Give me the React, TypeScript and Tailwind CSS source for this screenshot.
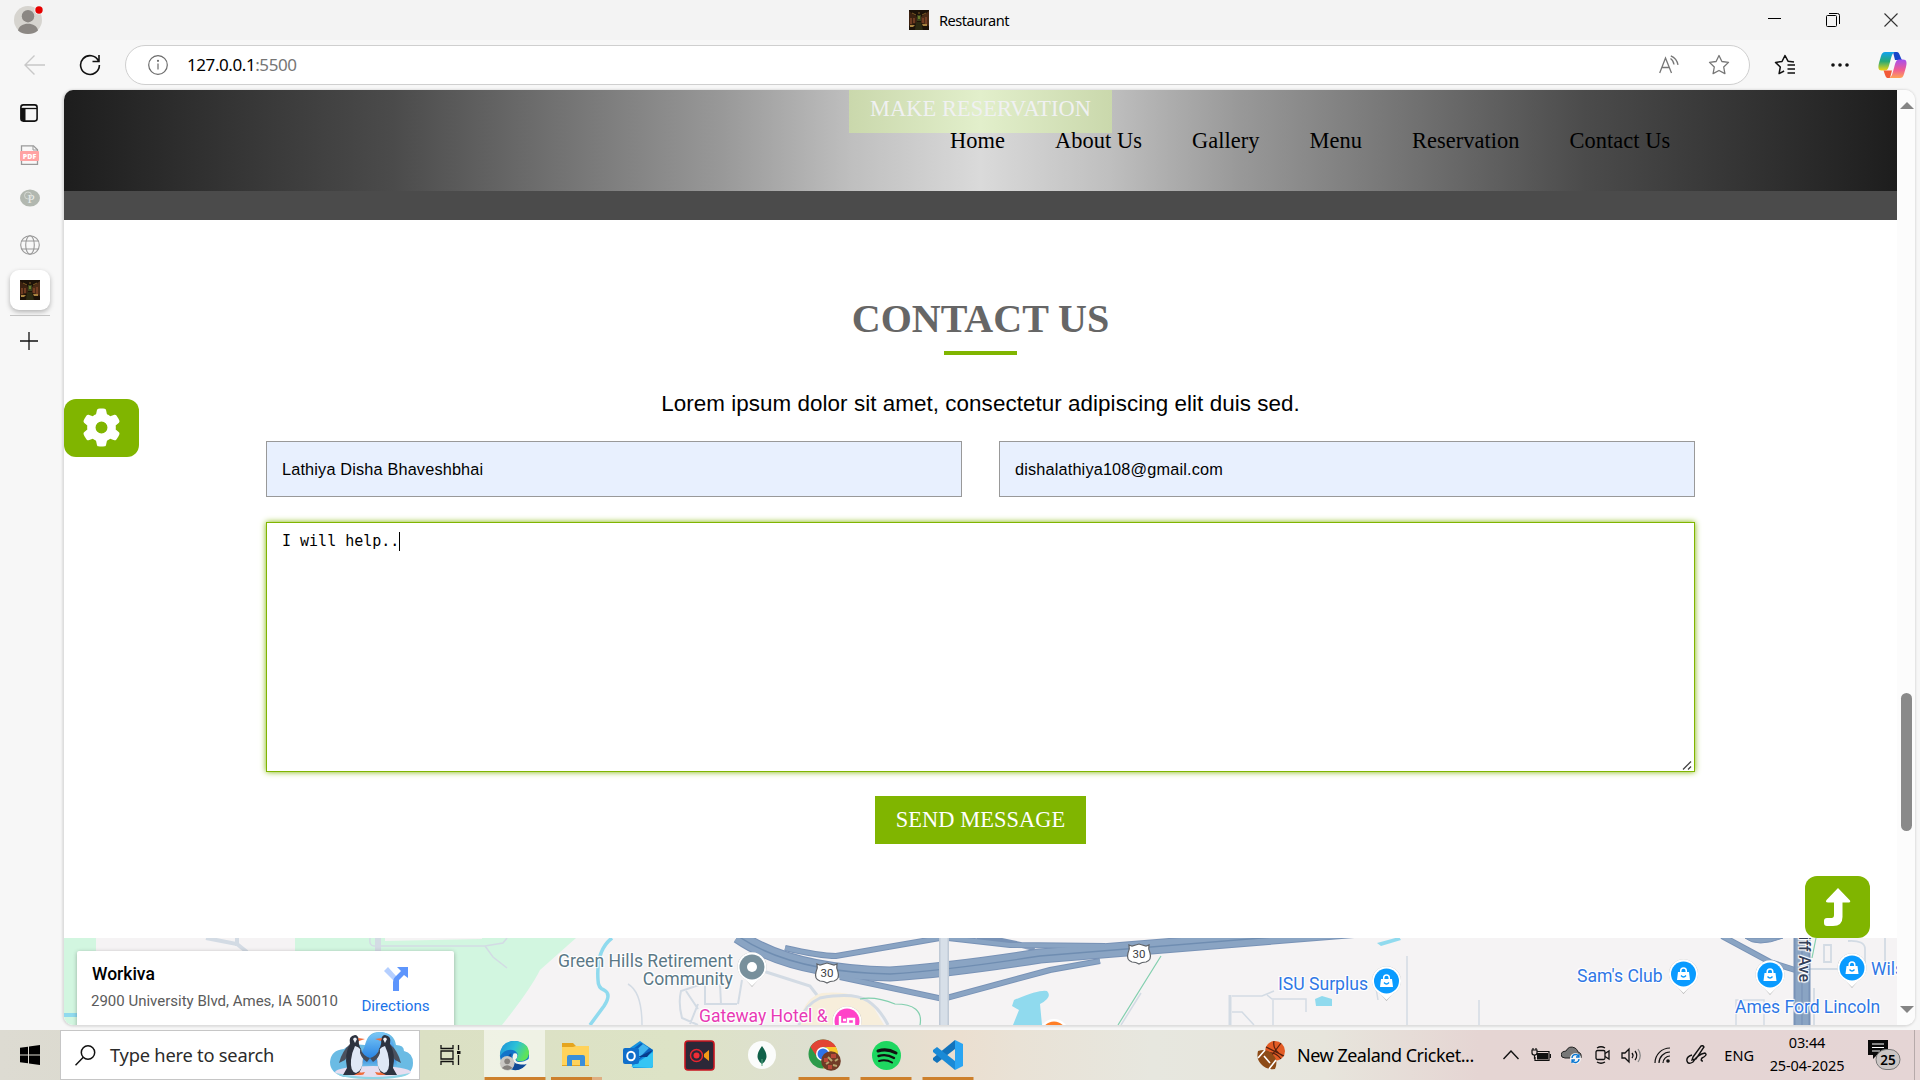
import React from "react";

type IconProps = { className?: string };

const Favicon = ({ className = "" }: IconProps) => (
  <svg className={className} width="20" height="20" viewBox="0 0 20 20">
    <rect width="20" height="20" fill="#1c1208" />
    <path d="M0 1L8 7V13L0 16Z" fill="#3b2110" />
    <path d="M20 1L12 7V13L20 16Z" fill="#4a2b16" />
    <path d="M2 8v6M5 8v5M14 8v5M17 7v7" stroke="#8a4a2c" strokeWidth="1.3" />
    <path d="M8 5h4v6H8z" fill="#38401c" />
    <path d="M9 6h2v3H9z" fill="#6b7a2c" />
    <path d="M1 15h5l-2 2H1zM13 14h5v2h-4z" fill="#a9843f" />
    <path d="M7 12h5l2 8H6z" fill="#2c2a12" />
    <path d="M3 3l4 2M17 3l-4 2M9 3h2" stroke="#7c5a24" />
  </svg>
);

const TitleBar = () => (
  <header className="flex h-10 shrink-0 items-center bg-[#f3f3f3]">
    <svg className="ml-3 shrink-0" width="34" height="40" viewBox="0 0 34 40">
      <circle cx="16" cy="20" r="14" fill="#d6d4cf" />
      <circle cx="16" cy="16.2" r="6.2" fill="#8b8783" />
      <path d="M6 30.5C7 26 11 23.8 16 23.8S25 26 26 30.5C23 33.200 19.500 34 16 34S9 33.200 6 30.500Z" fill="#8b8783" />
      <circle cx="27" cy="10" r="4.600" fill="#f3f3f3" />
      <circle cx="27" cy="10" r="3.700" fill="#e60000" />
    </svg>
    <div className="ml-[863px] flex items-center gap-[10px]">
      <Favicon />
      <span className="text-[14.6px] leading-5 tracking-[-0.5px] text-black">Restaurant</span>
    </div>
    <div className="ml-auto flex items-center gap-11 pr-[22px] text-black">
      <svg width="14" height="14" viewBox="0 0 14 14"><path d="M0 5.500h13" stroke="currentColor" /></svg>
      <svg width="14" height="14" viewBox="0 0 14 14" fill="none" stroke="currentColor"><rect x=".5" y="2.500" width="10" height="11" rx="1" /><path d="M3 .5h8.500q2 0 2 2V11" /></svg>
      <svg width="14" height="14" viewBox="0 0 14 14" stroke="#333" strokeWidth="1.1"><path d="M.5 .5l13 13M13.500 .5l-13 13" /></svg>
    </div>
  </header>
);

const Toolbar = () => (
  <div className="flex h-[50px] shrink-0 items-start bg-[#f7f7f7] pt-[5px]">
    <svg className="mt-[9px] ml-6 shrink-0" width="22" height="22" viewBox="0 0 22 22" fill="none" stroke="#c8c8c8" strokeWidth="1.4"><path d="M21 11H1M10.500 1.500L1 11l9.500 9.500" /></svg>
    <svg className="mt-[9px] ml-[33px] shrink-0" width="22" height="22" viewBox="0 0 22 22" fill="none" stroke="#111" strokeWidth="1.600"><path d="M19.500 7A9.400 9.400 0 1 0 20.400 11M20 1v6.500h-6.500" /></svg>
    <div className="ml-6 flex h-10 w-[1625px] shrink-0 items-center rounded-full border border-[#cfcfcf] bg-white pl-[22px]">
      <svg width="20" height="20" viewBox="0 0 20 20" fill="none" stroke="#6b6b6b" strokeWidth="1.2"><circle cx="10" cy="10" r="9.300" /><path d="M10 8.500v6" /><circle cx="10" cy="5.800" r=".5" fill="#6b6b6b" /></svg>
      <span className="ml-[19px] text-[17px] leading-6 tracking-[-0.42px] text-black">127.0.0.1<span className="text-[#767676]">:5500</span></span>
      <svg className="mr-[29px] ml-auto" width="20" height="20" viewBox="0 0 20 20" fill="none" stroke="#767676" strokeWidth="1.3"><path d="M.7 18L6.500 3L12.500 18M2.800 12.500h7.600M11.500 3.500q3 2 3.500 6M11.800 .8q6 2.500 7.200 9" /></svg>
      <svg className="mr-[19px]" width="22" height="22" viewBox="0 0 22 22" fill="none" stroke="#767676" strokeWidth="1.3" strokeLinejoin="round"><path d="M11 1.500l2.900 6 6.600.9-4.800 4.600 1.200 6.600L11 16.500l-5.900 3.100 1.200-6.600L1.500 8.400l6.600-.9z" /></svg>
    </div>
    <svg className="mt-[9px] ml-6 shrink-0" width="22" height="22" viewBox="0 0 22 22" fill="none" stroke="#111" strokeWidth="1.500" strokeLinejoin="round"><path d="M20 8l-6-.8L11 1.500l-3 6-6.500.9 4.800 4.600-1.200 6.600 5-2.600M13.500 11H21M13.500 15H21M13.500 19H21" /></svg>
    <svg className="mt-[17px] ml-[35px] shrink-0" width="18" height="6" viewBox="0 0 18 6" fill="#111"><circle cx="2" cy="3" r="1.800" /><circle cx="9" cy="3" r="1.800" /><circle cx="16" cy="3" r="1.800" /></svg>
    <svg className="mt-[6px] ml-[29px] shrink-0" width="29" height="28" viewBox="0 0 29 28">
      <defs>
        <linearGradient id="cpA" x1="0" y1="0" x2="0" y2="1"><stop stopColor="#10a2f0" /><stop offset=".5" stopColor="#25a978" /><stop offset="1" stopColor="#f1d411" /></linearGradient>
        <linearGradient id="cpB" x1="0" y1="0" x2="0" y2="1"><stop stopColor="#a44ff0" /><stop offset=".55" stopColor="#ef5a95" /><stop offset="1" stopColor="#ffa453" /></linearGradient>
      </defs>
      <path d="M15 1h4c2.500 0 3.200 5 5 8H17z" fill="#1746c9" />
      <path d="M7 1h10c-3 1-3.600 5-5 10s-2 8.500-5 8.500H3.500C0 19.500 0 16 1 12l2-7C4 2 5 1 7 1z" fill="url(#cpA)" />
      <path d="M12 27h-2.500c-2 0-2.500-4-4-7.500H14z" fill="#f25a37" />
      <path d="M22 27H11c3-1 3.600-5 5-10s2-8.500 5-8.500h4c4 0 4 3.500 3 7.500l-2 7c-1 3-2 4-4 4z" fill="url(#cpB)" />
    </svg>
  </div>
);

const SideTabs = () => (
  <aside className="flex w-[63px] shrink-0 flex-col bg-[#f7f7f7]">
    <svg className="mt-[14px] ml-5" width="18" height="18" viewBox="0 0 18 18"><rect x=".9" y=".9" width="16.200" height="16.200" rx="2.500" fill="none" stroke="#111" strokeWidth="1.600" /><path d="M1 4.500h16" stroke="#111" strokeWidth="1.300" /><path d="M1 4h4.500v13H3q-2 0-2-2z" fill="#111" /></svg>
    <svg className="mt-[23px] ml-5" width="20" height="20" viewBox="0 0 20 20"><path d="M1.500 19.300V.8h12l4 4v14.500z" fill="#f8f8f8" stroke="#9a9a9a" strokeWidth="1.300" /><path d="M13 1v4h4.500" fill="none" stroke="#9a9a9a" /><rect y="6" width="19" height="10" rx="1" fill="#ffa3a3" /><text x="9.500" y="13.600" textAnchor="middle" fontSize="7" fontWeight="900" fill="white">PDF</text></svg>
    <svg className="mt-6 ml-5" width="20" height="18" viewBox="0 0 20 18"><ellipse cx="10" cy="9" rx="10" ry="8.600" fill="#b2b8b0" /><text x="11" y="14" textAnchor="middle" fontSize="13" fill="#e9ebe7" fontFamily="Liberation Serif">P</text><circle cx="8" cy="6.500" r="3.500" fill="none" stroke="#dcdfda" strokeWidth=".8" /></svg>
    <svg className="mt-7 ml-5" width="20" height="20" viewBox="0 0 20 20" fill="none" stroke="#999" strokeWidth="1.100"><circle cx="10" cy="10" r="9.300" /><ellipse cx="10" cy="10" rx="4.300" ry="9.300" /><path d="M1.600 6h16.800M1.600 14h16.800" /></svg>
    <div className="mt-[15px] ml-[10px] flex size-10 items-center justify-center rounded-[9px] bg-white shadow-[0_2px_5px_rgba(0,0,0,0.28)]"><Favicon /></div>
    <div className="mt-[5px] ml-[10px] h-px w-10 bg-[#c4c4c4]" />
    <svg className="mt-4 ml-5" width="18" height="18" viewBox="0 0 18 18" stroke="#111" strokeWidth="1.300"><path d="M0 9h18M9 0v18" /></svg>
  </aside>
);

const NAV = ["Home", "About Us", "Gallery", "Menu", "Reservation", "Contact Us"];

const SiteHeader = () => (
  <div className="relative h-[101px] shrink-0 bg-[linear-gradient(90deg,#1d1d1d_0%,#4b4b4b_18%,#999_36%,#bfbfbf_43%,#dadada_50%,#bfbfbf_57%,#999_64%,#4b4b4b_83%,#1d1d1d_100%)] font-[Liberation_Serif,serif] text-black">
    <div className="absolute top-0 left-[785px] h-[43px] w-[263px] bg-[linear-gradient(90deg,#cad8ac,#e2efcb_50%,#cad8ac)] pt-[4px] text-center text-[22.4px] leading-[30px] tracking-[0.06px] text-[#f0f1f2]">MAKE RESERVATION</div>
    <nav className="relative flex gap-[50px] pt-[36px] pl-[886px] text-[22.4px] leading-[30px] tracking-[0.06px] whitespace-nowrap">
      {NAV.map((n) => <a key={n}>{n}</a>)}
    </nav>
  </div>
);

const Contact = () => (
  <section className="relative flex h-[718px] shrink-0 flex-col items-center">
    <h2 className="mt-[75px] font-[Liberation_Serif,serif] text-[40px] leading-[48px] font-bold text-[#666]">CONTACT US</h2>
    <div className="mt-2 h-1 w-[73px] bg-[#80b500]" />
    <p className="mt-[34px] font-[Liberation_Sans,sans-serif] text-[22.4px] leading-[30px] tracking-[0.06px] text-black">Lorem ipsum dolor sit amet, consectetur adipiscing elit duis sed.</p>
    <div className="mt-[22px] flex gap-[37px] font-[Liberation_Sans,sans-serif] text-[16.300px] tracking-[0.16px] text-black">
      <div className="flex h-14 w-[696px] items-center border border-[#999] bg-[#e8f0fe] px-[15px]">Lathiya Disha Bhaveshbhai</div>
      <div className="flex h-14 w-[696px] items-center border border-[#999] bg-[#e8f0fe] px-[15px]">dishalathiya108@gmail.com</div>
    </div>
    <div className="mt-[25px] flex h-[250px] w-[1429px] justify-between border border-[#80b500] shadow-[0_0_6px_#80b500]">
      <div className="flex h-9 items-center pl-[15px] font-[DejaVu_Sans_Mono,monospace] text-[15px] text-black">I will help..<span className="h-[19px] w-px bg-black" /></div>
      <svg className="mr-[2px] mb-[1px] self-end" width="10" height="9" viewBox="0 0 10 9" stroke="#444" strokeWidth="1.300"><path d="M1 8.500L9 .5M6 8.500L9 5.500" /></svg>
    </div>
    <button className="mt-6 h-12 w-[211px] bg-[#80b500] font-[Liberation_Serif,serif] text-[22.4px] tracking-[0.06px] text-white">SEND MESSAGE</button>
    <div className="absolute top-[179px] left-0 flex h-[58px] w-[75px] items-center justify-center rounded-xl bg-[#80b500]">
      <svg className="mb-px" width="37" height="39" viewBox="8 0 496 512" fill="white"><path d="M495.900 166.600c3.200 8.700.5 18.400-6.400 24.600l-43.300 39.400c1.100 8.300 1.700 16.800 1.700 25.400s-.6 17.100-1.700 25.400l43.300 39.400c6.900 6.200 9.600 15.900 6.400 24.600c-4.400 11.900-9.700 23.300-15.800 34.300l-4.700 8.100c-6.600 11-14 21.400-22.100 31.200c-5.900 7.200-15.700 9.600-24.500 6.800l-55.700-17.700c-13.400 10.300-28.200 18.900-44 25.400l-12.500 57.100c-2 9.100-9 16.300-18.200 17.800c-13.800 2.300-28 3.500-42.500 3.500s-28.700-1.200-42.500-3.500c-9.200-1.500-16.200-8.700-18.200-17.800l-12.500-57.100c-15.800-6.500-30.600-15.100-44-25.400L83.100 425.900c-8.800 2.800-18.600.3-24.500-6.800c-8.100-9.800-15.500-20.200-22.100-31.200l-4.700-8.100c-6.100-11-11.400-22.400-15.800-34.300c-3.200-8.700-.5-18.400 6.400-24.600l43.300-39.400C64.600 273.100 64 264.600 64 256s.6-17.100 1.700-25.400L22.400 191.200c-6.900-6.200-9.600-15.900-6.400-24.600c4.400-11.900 9.700-23.300 15.800-34.300l4.700-8.100c6.600-11 14-21.400 22.100-31.200c5.900-7.200 15.700-9.600 24.500-6.800l55.700 17.700c13.400-10.300 28.200-18.900 44-25.400l12.500-57.100c2-9.100 9-16.300 18.200-17.800C227.300 1.200 241.500 0 256 0s28.700 1.200 42.500 3.500c9.200 1.500 16.200 8.700 18.200 17.800l12.500 57.100c15.800 6.500 30.600 15.100 44 25.400l55.700-17.700c8.800-2.800 18.600-.3 24.500 6.800c8.100 9.800 15.500 20.200 22.100 31.200l4.700 8.100c6.100 11 11.400 22.400 15.800 34.300zM256 336a80 80 0 1 0 0-160 80 80 0 1 0 0 160z" /></svg>
    </div>
    <div className="absolute right-[27px] bottom-0 flex h-[62px] w-[65px] items-center justify-center rounded-xl bg-[#80b500]">
      <svg className="mr-px" width="28" height="40" viewBox="0 0 28 40" fill="white"><path d="M15 1L27 13.500Q28 15.500 25 15.500H19.500V30Q19.500 39 10 39H4Q1 39 1 36V34Q1 31 4 31H8.500Q11 31 11 28V15.500H5Q2 15.500 3.500 13z" /></svg>
    </div>
  </section>
);

const Pin = ({ x, y, c, kind }: { x: number; y: number; c: string; kind: "bag" | "dot" | "bed" }) => (
  <g transform={`translate(${x} ${y})`}>
    <path d="M0 20L-6 13A14.500 14.500 0 1 1 6 13z" fill="#8889" />
    <path d="M0 19L-6.500 12.800A14.500 14.500 0 1 1 6.500 12.800z" fill="white" />
    <circle r="12.500" fill={c} />
    {kind === "dot" && <circle r="5" fill="white" />}
    {kind === "bag" && (
      <>
        <path d="M-5.500 -2h11l1 8h-13z" fill="white" />
        <path d="M-2.800 -1v-2a2.800 3 0 0 1 5.600 0v2" fill="none" stroke="white" strokeWidth="1.500" />
        <path d="M-2.500 1.500q2.500 3 5 0" fill="none" stroke={c} strokeWidth="1.400" />
      </>
    )}
    {kind === "bed" && <path d="M-7 -5v11M-7 3H7V-2H1V3M-4 -1h3" fill="none" stroke="white" strokeWidth="2.400" />}
  </g>
);

const Shield = ({ x, y }: { x: number; y: number }) => (
  <g transform={`translate(${x} ${y})`}>
    <path d="M-10 -9L-7 -8 0 -10 7 -8 10 -9Q9 -5 11 -1Q13 6 7 8Q3 8 0 10Q-3 8 -7 8Q-13 6 -11 -1Q-9 -5 -10 -9Z" fill="white" stroke="#5f6368" strokeWidth="1.200" />
    <text y="4" textAnchor="middle" fontSize="11.500" fill="#3c4043">30</text>
  </g>
);

const label = "[text-shadow:0_0_2px_#fff,1px_1px_1px_#fff,-1px_-1px_1px_#fff,1px_-1px_1px_#fff,-1px_1px_1px_#fff] absolute whitespace-nowrap leading-[18px]";

const MapPanel = () => (
  <div className="relative h-[87px] shrink-0 overflow-hidden bg-[#f5f3f4] font-[Roboto,sans-serif]">
    <svg className="block" width="1833" height="87" viewBox="64 938 1833 87">
      <path d="M64 938H96V1025H64zM295 938H576L540 970Q530 990 502 1025H295z" fill="#d2f6e0" />
      <path d="M385 938h97v1l-97 2z" fill="#f5f3f4" />
      <path d="M64 1015h20" stroke="#90daee" strokeWidth="4" />
      <g fill="none" stroke="#d3dbe4" strokeWidth="2">
        <path d="M206 938L237 944 247 952M237 938v8" strokeWidth="4" />
        <path d="M378 938v14" strokeWidth="6" />
        <path d="M370 938Q369 946 374 946H485L503 943L507 938M485 946L493 957 507 968" strokeWidth="1.500" />
        <path d="M763 971L810 986 820 999" strokeWidth="3" />
        <path d="M699 985l-18 6Q678 1003 682 1018L698 1025M686 991l12 18M705 983v21h32M698 1004l-8 20M720 984l1 20M738 1004l4-24" />
        <path d="M628 984q14 8 14 41" strokeWidth="1.500" />
        <path d="M1230 995v30" strokeWidth="3" />
        <path d="M1232 996h30l12-5M1267 995l5 4h34v13M1273 1000v25M1232 1012h10l12 13M1141 993l-20 32M1407 956v69M1378 1000l-2-12M1479 1000v25M1736 1025V1000h28v25M1779 1014l-4-13" strokeWidth="1.500" />
        <path d="M1824 945h7v17h-7zM1810 969h40M1848 941q17-1 17 8v13M1885 938v24M1814 988v37" strokeWidth="1.800" />
      </g>
      <path d="M799 1025Q803 998 822 993 860 990 874 1008L884 1025z" fill="#f7eedb" />
      <path d="M799 1025Q803 1006 820 998 854 992 868 1001 880 1009 888 1025" fill="none" stroke="#d3dbe4" strokeWidth="3" />
      <path d="M612 938Q596 950 598 980q0 8 6 10 8 4 0 16L590 1025" fill="none" stroke="#90daee" strokeWidth="3.500" />
      <path d="M860 999Q875 996 895 1004 924 1004 920 1025M1161 956L1118 1025M1816 938l-4 20" fill="none" stroke="#82cfae" strokeWidth="1.200" />
      <g fill="none" stroke="#7892b6">
        <path d="M738 936Q790 972 890 974Q950 970 1040 956L1360 930" strokeWidth="15" />
        <path d="M785 948Q820 956 836 956L940 938" strokeWidth="6" />
        <path d="M840 977L943 999L1050 970L1100 961" strokeWidth="6" />
        <path d="M948 938L1010 945L1105 946M978 936L1035 948" strokeWidth="6" />
        <path d="M1722 936L1770 962L1795 970" strokeWidth="6" />
      </g>
      <g fill="none" stroke="#8aa4c3">
        <path d="M738 936Q790 972 890 974Q950 970 1040 956L1360 930" strokeWidth="13" />
        <path d="M785 948Q820 956 836 956L940 938M840 977L943 999L1050 970L1100 961M948 938L1010 945L1105 946M1722 936L1770 962L1795 970" strokeWidth="4.200" />
      </g>
      <path d="M738 936Q790 972 890 974Q950 970 1040 956L1360 930" fill="none" stroke="#6f8db1" strokeWidth="1.400" />
      <path d="M1745 938Q1757 948 1783 938z" fill="#8aa4c3" stroke="#7892b6" />
      <path d="M944 938v87" stroke="#c0cad6" strokeWidth="10" /><path d="M944 938v87" stroke="#d7dfe8" strokeWidth="7" />
      <path d="M1802 938v87" stroke="#7892b6" strokeWidth="17" /><path d="M1802 938v87" stroke="#8aa4c3" strokeWidth="13" /><path d="M1802 938v87" stroke="#7892b6" strokeWidth="1.200" />
      <path d="M1014 1000Q1040 989 1047 991 1053 997 1040 1004L1042 1025H1013L1019 1010 1012 1006z" fill="#90daee" />
      <path d="M1315 999l7-3 10 3v7h-16zM1377 943l22-6 2 3-20 6z" fill="#90daee" />
      <Shield x={827} y={973} /><Shield x={1139} y={954} />
      <Pin x={752} y={967} c="#78909c" kind="dot" />
      <Pin x={847} y={1021} c="#ff42c8" kind="bed" />
      <g><circle cx="1054" cy="1034" r="15" fill="white" /><circle cx="1054" cy="1034" r="12.500" fill="#ff7f27" /></g>
      <Pin x={1386.5} y={981} c="#0a9bff" kind="bag" />
      <Pin x={1683.5} y={974} c="#0a9bff" kind="bag" />
      <Pin x={1770} y={975} c="#0a9bff" kind="bag" />
      <Pin x={1852} y={968} c="#0a9bff" kind="bag" />
    </svg>
    <div className={`${label} top-[14px] left-[494px] text-right text-[17.600px] text-[#5b7886]`}>Green Hills Retirement<br />Community</div>
    <div className={`${label} top-[69px] left-[635px] text-[17.500px] text-[#e83ab5]`}>Gateway Hotel &amp;</div>
    <div className={`${label} top-[37px] left-[1214px] text-[17.600px] text-[#2f77e5]`}>ISU Surplus</div>
    <div className={`${label} top-[29px] left-[1513px] text-[17.600px] text-[#2f77e5]`}>Sam's Club</div>
    <div className={`${label} top-[60px] left-[1671px] text-[17.500px] text-[#2f77e5]`}>Ames Ford Lincoln</div>
    <div className={`${label} top-[22px] left-[1807px] text-[17.500px] text-[#2f77e5]`}>Wils</div>
    <div className={`${label} top-[-2px] left-[1731px] text-[16px] font-medium text-[#34415a] [writing-mode:vertical-rl]`}>iff Ave</div>
    <div className="absolute top-[13px] left-[13px] flex h-20 w-[377px] rounded-t-[2px] bg-white pt-[13px] pl-[14px] shadow-[0_1px_4px_rgba(0,0,0,0.3)]">
      <div className="flex w-[250px] flex-col whitespace-nowrap">
        <span className="pl-px text-[17.500px] leading-5 font-medium text-black">Workiva</span>
        <span className="mt-[7px] text-[15px] leading-5 text-[#5b5b5b]">2900 University Blvd, Ames, IA 50010</span>
      </div>
      <div className="ml-[16px] flex w-[77px] flex-col items-center text-[15.200px] text-[#1a73e8]">
        <svg className="mt-[3px]" width="24" height="24" viewBox="0 0 24 24"><path d="M4 0L0 4 10 14 13 10z" fill="#b5cfff" /><path d="M13 0H24V11L20 8 15 13V24H9V15Q9 12 11 10L17 4z" fill="#5d95fc" /></svg>
        <span className="mt-[5px] leading-5">Directions</span>
      </div>
    </div>
  </div>
);

const Scrollbar = () => (
  <div className="flex w-[18px] shrink-0 flex-col items-center bg-[#fcfcfc]">
    <svg className="mt-3 ml-px" width="14" height="7" viewBox="0 0 14 7"><path d="M7 0L14 7H0z" fill="#858585" /></svg>
    <div className="mt-[584px] ml-px h-[138px] w-[11px] rounded-full bg-[#8a8a8a]" />
    <svg className="mt-auto mb-[12px] ml-px" width="14" height="7" viewBox="0 0 14 7"><path d="M7 7L14 0H0z" fill="#858585" /></svg>
  </div>
);

const Penguin = () => (
  <g>
    <path d="M11 12Q3 19 0 31L6 28 10 22z" fill="#4b515e" />
    <path d="M16 3Q9 4 11 12 5 22 8 36L4 43H19Q27 30 22 17 19 12 20 8 19 3 16 3z" fill="#2d3340" />
    <path d="M16 14Q23 15 24 26 24 39 17 41 11 40 12 28 13 20 16 14z" fill="#dfe8f6" />
    <path d="M21 16q3 8 10 10l-3 4q-5-3-7-9z" fill="#454b58" />
    <path d="M19 6l7 1-6 2zM15 43l6-3 2 3zM20 41l6-1-2 3z" fill="#ef6c3b" />
    <path d="M14 7q2-3 4 0l-2 4z" fill="#eef3fa" />
  </g>
);

const Penguins = () => (
  <svg className="shrink-0" width="84" height="48" viewBox="0 0 84 48">
    <defs><linearGradient id="sky" x1="0" y1="0" x2="0" y2="1"><stop stopColor="#7cc9f6" /><stop offset=".65" stopColor="#2b86e4" /><stop offset="1" stopColor="#8ed5e8" /></linearGradient></defs>
    <path d="M14 46Q0 42 0 31 1 19 14 18 20 12 35 14 38 0 51 1 64 2 66 14 74 14 74 20 83 22 83 32 83 44 68 46z" fill="#6abbe4" />
    <path d="M22 40Q34 18 36 12 40 1 51 1 62 2 64 16L68 40z" fill="url(#sky)" />
    <ellipse cx="43" cy="41" rx="38" ry="6" fill="#e6def0" /><path d="M6 42q37 8 74 0-6 6-37 6T6 42z" fill="#8fd5e6" />
    <g transform="translate(9 1)"><Penguin /></g>
    <g transform="translate(71 1) scale(-1 1)"><Penguin /></g>
  </svg>
);

const Bar = ({ children, w, active = false }: { children: React.ReactNode; w: string; active?: boolean }) => (
  <div className={`relative flex h-[50px] shrink-0 items-center justify-center ${w} ${active ? "bg-white/55" : ""}`}>{children}</div>
);

const Under = ({ c = "w-[51px]" }: { c?: string }) => <div className={`absolute bottom-0 left-1/2 h-[3px] -translate-x-1/2 bg-[#cd802c] ${c}`} />;

const Taskbar = () => (
  <footer className="flex h-[50px] shrink-0 items-center bg-[linear-gradient(90deg,#dddbd2_0%,#d9d9ca_15%,#dbe0c4_22%,#dde3c6_35%,#dedfd1_43%,#ebdfd0_50%,#e9e2d6_53%,#e7e7df_60%,#e7e5dc_69%,#e5d5d3_77%,#e5d5d5_100%)] text-black">
    <div className="flex w-[60px] shrink-0 justify-center">
      <svg width="20" height="20" viewBox="0 0 20 20"><path d="M0 2.800L8 1.700V9.500H0zM9 1.500L20 0V9.500H9zM0 10.500H8V18.300L0 17.200zM9 10.500H20V20L9 18.500z" /></svg>
    </div>
    <div className="flex h-[50px] w-[360px] shrink-0 items-center border border-[#c6c6c6] bg-white pl-[14px]">
      <svg width="21" height="21" viewBox="0 0 21 21" fill="none" stroke="#111" strokeWidth="1.500"><circle cx="13" cy="7.500" r="6.700" /><path d="M8.300 12.300L.5 20.200" /></svg>
      <span className="ml-[14px] w-[164px] text-[18.300px] leading-6 tracking-[-0.22px] whitespace-nowrap text-[#2b2b2b]">Type here to search</span>
      <span className="ml-[56px] flex"><Penguins /></span>
    </div>
    <Bar w="w-[64px]"><svg className="-ml-1" width="21" height="20" viewBox="0 0 21 20" fill="none" stroke="#111" strokeWidth="1.300"><path d="M1 0v3.500h12V0M1 20v-3.500h12V20M1 6h12v8H1zM18.500 0v5M18.500 10v10" /><path d="M17 6h3.500v3H17z" fill="#111" stroke="none" /></svg></Bar>
    <Bar w="w-[61px]" active>
      <svg className="mr-px" width="31" height="31" viewBox="0 0 32 32">
        <defs><linearGradient id="edg" x1="0" y1="0" x2="1" y2=".4"><stop stopColor="#1c8ed8" /><stop offset=".55" stopColor="#2bc1d8" /><stop offset="1" stopColor="#5ee35a" /></linearGradient></defs>
        <circle cx="16" cy="16" r="15" fill="#1273c9" />
        <path d="M1 15Q2 1 16 1 31 2 31 14q-1 8-9 8-5 0-4-3 2-2 1-5-2-4-7-4Q5 10 1 17z" fill="url(#edg)" />
        <path d="M13 14q-3 12 14 11l2-1q-5 8-14 7Q8 27 9 19q1-5 4-5z" fill="#104a96" />
        <path d="M15 14q4-1 4 2t-2 4q1 4 9 2l6-3q-1 3-3 5.500-4 1.500-8 .5-8-1-7-8z" fill="#f1f5ee" />
        <circle cx="8.500" cy="24" r="7.500" fill="#c9c7c4" /><circle cx="8.500" cy="22" r="3" fill="#85817e" /><path d="M3 29q5-6 11 0-5 4-11 0z" fill="#85817e" />
      </svg>
      <Under c="w-full" />
    </Bar>
    <Bar w="w-[62px]">
      <svg width="28" height="24" viewBox="0 0 28 24"><path d="M0 0h11l3 3h13v20H0z" fill="#e5a51f" /><path d="M0 4h11l3-1h13v19H0z" fill="#ffd35b" /><path d="M5 23V14q0-2 2-2h14q2 0 2 2v9h-5v-6h-8v6z" fill="#3a8fd9" /></svg>
      <div className="absolute bottom-0 left-[6px] h-[3px] w-[41px] bg-[#cd802c]" /><div className="absolute bottom-0 left-[47px] h-[3px] w-[10px] bg-[#dfaf82]" />
    </Bar>
    <Bar w="w-[62px]">
      <svg width="31" height="28" viewBox="0 0 31 28"><path d="M4 9L17 0 30 9v16q0 2-2 2H10z" fill="#1490df" /><path d="M6 11L18 2 30 9 14 20z" fill="#0b62bd" /><path d="M10 12l10-9 6 4-10 10z" fill="#41b4ee" /><path d="M8 26L30 11v13q0 3-3 3z" fill="#35c5f4" /><path d="M15 16L30 9 24 16z" fill="#073c8c" /><rect y="7" width="16" height="16" rx="2" fill="#0f6fcb" /><ellipse cx="8" cy="15" rx="3.800" ry="4.300" fill="none" stroke="white" strokeWidth="2" /></svg>
    </Bar>
    <Bar w="w-[62px]">
      <svg className="mr-px" width="31" height="31" viewBox="0 0 31 31"><rect x="1" y="1" width="29" height="29" rx="3" fill="#2c2838" stroke="#c8141f" strokeWidth="1.600" /><circle cx="12.500" cy="15.500" r="6" fill="none" stroke="#e8252f" strokeWidth="1.500" /><circle cx="12.500" cy="15.500" r="3" fill="#f02d36" /><path d="M20 14l5-4v11l-5-4z" fill="#f59a16" /></svg>
    </Bar>
    <Bar w="w-[62px]">
      <svg width="28" height="28" viewBox="0 0 28 28"><circle cx="14" cy="14" r="14" fill="#fbfcfb" /><path d="M14 5Q8 13 10 18q1 3 4 5 3-2 4-5 2-5-4-13z" fill="#116149" /><path d="M14 18v7" stroke="#5ba884" /></svg>
    </Bar>
    <Bar w="w-[62px]">
      <svg width="33" height="32" viewBox="0 0 33 32"><circle cx="15" cy="15" r="14.500" fill="#2c9b4a" /><path d="M2.500 8A14.500 14.500 0 0 1 28 8H15L9 18z" fill="#e24435" /><path d="M28 8A14.500 14.500 0 0 1 15 29.500L21 18 18 8z" fill="#fbc72b" /><circle cx="15" cy="15" r="7" fill="white" /><circle cx="15" cy="15" r="5.500" fill="#2f73e8" /><circle cx="23" cy="22" r="9.800" fill="#713b27" /><path d="M16 19h4v4h-4zM23 15h5v4h-5zM20 26h4v4h-4z" fill="#b94838" /><path d="M20 18l4 4M27 22l3-2M18 25l3-2M25 26l4 1" stroke="#b7a56f" strokeWidth="2" /></svg>
      <Under />
    </Bar>
    <Bar w="w-[62px]">
      <svg width="29" height="29" viewBox="0 0 29 29"><circle cx="14.500" cy="14.500" r="14.500" fill="#1ed760" /><g fill="none" stroke="#111" strokeLinecap="round"><path d="M6 10q9-3 18 2" strokeWidth="3" /><path d="M6.500 15q8-2.500 15.500 2" strokeWidth="2.400" /><path d="M7 20q7-2 13 1.500" strokeWidth="2" /></g></svg>
      <Under />
    </Bar>
    <Bar w="w-[62px]">
      <svg width="30" height="30" viewBox="0 0 30 30"><path d="M22 0L30 4V26L22 30z" fill="#2aa5f2" /><path d="M22 0v9L4 23 0 20v-2z" fill="#1273bb" /><path d="M22 30v-9L4 7 0 10v2z" fill="#1a8ad6" /></svg>
      <Under />
    </Bar>
    <div className="ml-[278px] flex w-[220px] shrink-0 items-center">
      <svg width="29" height="29" viewBox="0 0 29 29"><circle cx="18" cy="10" r="10" fill="#e35c25" /><path d="M9 6l18 9M24 2L12 18M17 0q-2 9 9 15M9 13q8-4 15 5" fill="none" stroke="#57200d" strokeWidth="1.200" /><path d="M1 10Q10 7 15 13 22 18 18 28 9 29 4 23-1 18 1 10z" fill="#8d4b17" /><path d="M1 17L8 9M12 28l7-9M7 15l6 7" stroke="white" strokeWidth="1.600" /></svg>
      <span className="ml-[11px] text-[18px] leading-6 tracking-[-0.48px] whitespace-nowrap">New Zealand Cricket...</span>
    </div>
    <div className="ml-auto flex shrink-0 items-center">
      <svg width="16" height="10" viewBox="0 0 16 10" fill="none" stroke="#111" strokeWidth="1.400"><path d="M.5 9L8 1l7.500 8" /></svg>
      <svg className="ml-3" width="20" height="14" viewBox="0 0 20 14" fill="none" stroke="#111" strokeWidth="1.200"><path d="M6 3.500h12v9H4V9M19.500 6v4" /><rect x="6" y="5" width="11" height="6.500" fill="#111" stroke="none" /><path d="M1 2h5v3q0 2-2.500 2T1 5zM2 0v2M5 0v2M3.500 7v4" /></svg>
      <svg className="ml-[10px]" width="21" height="18" viewBox="0 0 21 18"><path d="M4 12Q0 12 0 8 1 5 5 5 8-1 14 2q2 1 3 4 4 1 3 6z" fill="#777" stroke="#222" /><circle cx="14.500" cy="12.500" r="5.500" fill="#f5f5f5" /><path d="M11 12a3.600 3.600 0 0 1 6.500-2M18 13a3.600 3.600 0 0 1-6.500 2M18 8v3h-3M11 17v-3h3" fill="none" stroke="#0876d1" strokeWidth="1.300" /></svg>
      <svg className="ml-[13px]" width="16" height="18" viewBox="0 0 16 18" fill="none" stroke="#111" strokeWidth="1.300"><rect x="1" y="4.500" width="9" height="9" rx="1.500" /><path d="M10 7.500l4-2.500v8l-4-2.500M2 2q4-2.500 8 0M2 16q4 2.500 8 0" /></svg>
      <svg className="ml-[10px]" width="21" height="17" viewBox="0 0 21 17" fill="none" stroke="#111" strokeWidth="1.300"><path d="M1 6h3l4-4v13l-4-4H1zM11 6q2 2.500 0 5M14 4q3.500 4.500 0 9" /><path d="M17 2q4.500 6.500 0 13" stroke="#888" /></svg>
      <svg className="ml-[12px]" width="17" height="17" viewBox="0 0 17 17" fill="none" stroke="#111" strokeWidth="1.200"><path d="M1 16A15 15 0 0 1 16 1M5 16A11 11 0 0 1 16 5M9 16a7 7 0 0 1 7-7" /><circle cx="14" cy="14" r="1.800" fill="#111" stroke="none" /></svg>
      <svg className="ml-[15px]" width="21" height="20" viewBox="0 0 21 20" fill="none" stroke="#111" strokeWidth="1.400"><path d="M7 12L15 1q2-1 3 1L10 14l-4 1zM6 10q-6 2-5 6t6 1q5-8 12-9 3 2-3 5-2 3 1 3" /></svg>
      <span className="ml-[17px] text-[14.500px] leading-5">ENG</span>
      <div className="-mt-0.5 ml-[14px] flex w-[78px] flex-col items-center text-[14.500px] leading-[23px] tracking-[-0.1px] whitespace-nowrap"><span>03:44</span><span>25-04-2025</span></div>
      <svg className="mr-[12px] ml-[22px]" width="34" height="32" viewBox="0 0 34 32"><path d="M0 1h20v15H9l-4 4v-4H0z" fill="#0a0a0a" /><path d="M4 5h12M4 8.500h12M4 12h8" stroke="white" strokeWidth="1.200" /><rect x="8" y="10.500" width="24" height="20" rx="10" fill="#cbc6c5" stroke="#777" /><text x="20" y="25.500" textAnchor="middle" fontSize="13.500" fontWeight="600">25</text></svg>
      <div className="mr-[5px] h-[50px] w-px bg-[#b6aaaa]" />
    </div>
  </footer>
);

export default function App() {
  return (
    <div className="flex h-[1080px] w-[1920px] flex-col overflow-hidden bg-[#f7f7f7] font-[Noto_Sans,sans-serif]">
      <TitleBar />
      <Toolbar />
      <div className="flex h-[940px] shrink-0">
        <SideTabs />
        <div className="flex h-[936px] overflow-hidden rounded-[10px] border-b border-l border-[#dedede] bg-white shadow-[0_0_3px_rgba(0,0,0,0.2)]">
          <main className="flex w-[1833px] shrink-0 flex-col">
            <SiteHeader />
            <div className="h-[29px] shrink-0 bg-[#4b4b4b]" />
            <Contact />
            <MapPanel />
          </main>
          <Scrollbar />
        </div>
      </div>
      <Taskbar />
    </div>
  );
}
